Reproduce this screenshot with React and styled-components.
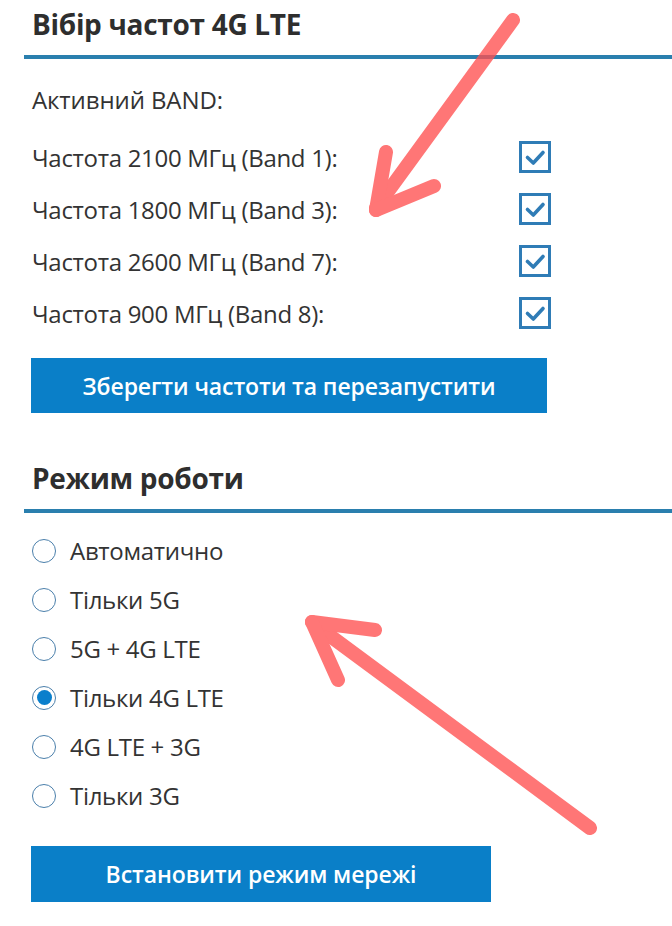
import React, { useState } from "react";
import styled, { createGlobalStyle } from "styled-components";

const GlobalStyle = createGlobalStyle`
  html, body {
    margin: 0;
    padding: 0;
    background: #fff;
  }
  body {
    font-family: "Open Sans", "Noto Sans", sans-serif;
    color: #333;
  }
`;

const Page = styled.div`
  position: relative;
  width: 672px;
  height: 926px;
  overflow: hidden;
  padding-left: 24px;
  box-sizing: border-box;
`;

const Section = styled.section`
  display: flex;
  flex-direction: column;
`;

const Title = styled.h2`
  margin: ${(p) => p.$top}px 0 0;
  padding: 0 0 13px 8px;
  border-bottom: 4px solid #2a7fae;
  font-size: 28px;
  line-height: 36px;
  font-weight: 700;
  letter-spacing: -0.3px;
  color: #2e2e2e;
`;

const Body = styled.div`
  display: flex;
  flex-direction: column;
  padding-left: 8px;
`;

const Caption = styled.div`
  margin-top: 26px;
  margin-bottom: 16px;
  font-size: 24px;
  line-height: 30px;
  letter-spacing: -0.1px;
`;

const BandRow = styled.label`
  display: flex;
  align-items: center;
  justify-content: space-between;
  width: 519px;
  height: 52px;
  font-size: 24px;
  letter-spacing: -0.3px;
  cursor: pointer;
`;

const Box = styled.span`
  display: flex;
  align-items: center;
  justify-content: center;
  width: 32px;
  height: 32px;
  box-sizing: border-box;
  border: 3px solid #2f7cb6;
  background: #fff;
`;

const Button = styled.button`
  width: ${(p) => p.$w}px;
  height: ${(p) => p.$h}px;
  margin: ${(p) => p.$top}px 0 0 -1px;
  border: 0;
  background: #0a7fc8;
  color: #fff;
  font-family: "Open Sans", "Noto Sans", sans-serif;
  font-size: 23px;
  font-weight: 600;
  letter-spacing: -0.1px;
  cursor: pointer;
`;

const RadioList = styled.div`
  display: flex;
  flex-direction: column;
  margin-top: 13px;
`;

const RadioRow = styled.label`
  display: flex;
  align-items: center;
  gap: 14px;
  height: 49px;
  font-size: 24px;
  letter-spacing: -0.3px;
  cursor: pointer;
`;

const Circle = styled.span`
  display: flex;
  align-items: center;
  justify-content: center;
  width: 24px;
  height: 24px;
  box-sizing: border-box;
  border-radius: 50%;
  border: 1.5px solid #4b7fab;
  background: #fff;

  &::after {
    content: "";
    display: ${(p) => (p.$on ? "block" : "none")};
    width: 15px;
    height: 15px;
    border-radius: 50%;
    background: #0a7fcc;
  }
`;

const Overlay = styled.svg`
  position: absolute;
  left: 0;
  top: 0;
  pointer-events: none;
`;

const bands = [
  "Частота 2100 МГц (Band 1):",
  "Частота 1800 МГц (Band 3):",
  "Частота 2600 МГц (Band 7):",
  "Частота 900 МГц (Band 8):",
];

const modes = [
  "Автоматично",
  "Тільки 5G",
  "5G + 4G LTE",
  "Тільки 4G LTE",
  "4G LTE + 3G",
  "Тільки 3G",
];

const Check = () => (
  <svg width="26" height="26" viewBox="0 0 26 26">
    <path
      d="M5.5 13.5 L11.3 19 L21 8.5"
      fill="none"
      stroke="#2f7cb6"
      strokeWidth="3.6"
      strokeLinecap="round"
      strokeLinejoin="round"
    />
  </svg>
);

const Arrow = ({ lines }) => (
  <g stroke="#ff5050" strokeWidth="14" strokeLinecap="round" opacity="0.78">
    {lines.map((l, i) => (
      <line key={i} x1={l[0]} y1={l[1]} x2={l[2]} y2={l[3]} />
    ))}
  </g>
);

export default function App() {
  const [mode, setMode] = useState(3);

  return (
    <>
      <GlobalStyle />
      <Page>
        <Section>
          <Title $top={6}>Вібір частот 4G LTE</Title>
          <Body>
            <Caption>Активний BAND:</Caption>
            {bands.map((b) => (
              <BandRow key={b}>
                <span>{b}</span>
                <Box>
                  <Check />
                </Box>
              </BandRow>
            ))}
            <Button $w={516} $h={55} $top={19}>
              Зберегти частоти та перезапустити
            </Button>
          </Body>
        </Section>

        <Section>
          <Title $top={47}>Режим роботи</Title>
          <Body>
            <RadioList>
              {modes.map((m, i) => (
                <RadioRow key={m} onClick={() => setMode(i)}>
                  <Circle $on={mode === i} />
                  <span>{m}</span>
                </RadioRow>
              ))}
            </RadioList>
            <Button $w={460} $h={56} $top={26}>
              Встановити режим мережі
            </Button>
          </Body>
        </Section>

        <Overlay width="672" height="926" viewBox="0 0 672 926">
          <Arrow
            lines={[
              [513, 20, 376, 208],
              [376, 210, 386, 152],
              [376, 210, 434, 186],
            ]}
          />
          <Arrow
            lines={[
              [590, 828, 314, 624],
              [312, 622, 375, 630],
              [312, 622, 338, 680],
            ]}
          />
        </Overlay>
      </Page>
    </>
  );
}
